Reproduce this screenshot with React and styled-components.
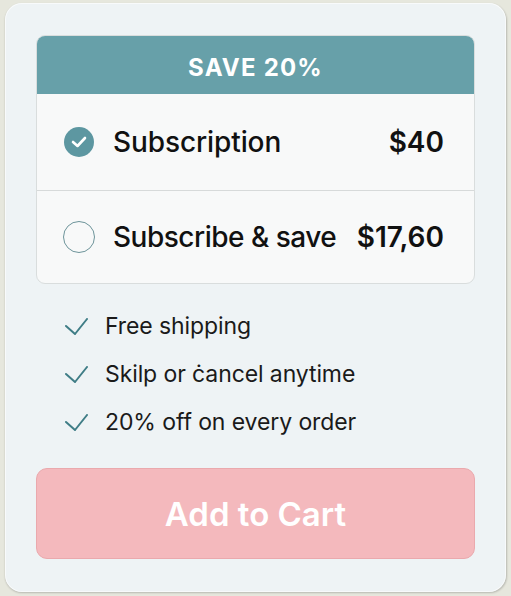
import React from "react";
import styled, { createGlobalStyle } from "styled-components";

const Global = createGlobalStyle`
  html, body { margin: 0; padding: 0; background: #e6e7dd; }
  body { font-family: Inter, "Noto Sans", sans-serif; }
`;

const Page = styled.div`
  width: 511px;
  height: 596px;
  padding: 3px 0 0 5px;
  box-sizing: border-box;
`;

const Card = styled.div`
  width: 501px;
  height: 589px;
  box-sizing: border-box;
  background: #eef3f5;
  border-radius: 17px;
  box-shadow: 0.5px 1px 2px rgba(0,0,0,0.2), inset 0 0 0 1px rgba(255,255,255,0.6);
  padding: 32px 31px 0 31px;
  display: flex;
  flex-direction: column;
`;

const OptionsBox = styled.div`
  background: #f8f9f9;
  border: 1px solid #d9dddd;
  border-radius: 9px;
  overflow: hidden;
  display: flex;
  flex-direction: column;
`;

const Header = styled.div`
  height: 58px;
  box-sizing: border-box;
  padding-top: 5px;
  background: #67a0a9;
  color: #fff;
  font-size: 24px;
  font-weight: 700;
  letter-spacing: 1.2px;
  display: flex;
  align-items: center;
  justify-content: center;
`;

const Option = styled.div`
  height: ${(p) => p.$h}px;
  display: flex;
  align-items: center;
  padding: 0 30px 0 26px;
  border-top: ${(p) => (p.$divided ? "1px solid #d7dada" : "none")};
  color: #111;
`;

const Radio = styled.span`
  width: 32px;
  height: 32px;
  box-sizing: border-box;
  border-radius: 50%;
  flex: none;
  display: flex;
  align-items: center;
  justify-content: center;
  background: ${(p) => (p.$checked ? "#5d97a1" : "transparent")};
  border: ${(p) => (p.$checked ? "none" : "1.6px solid #6d949a")};
  ${(p) => p.$checked && "width: 30px; height: 30px; margin: 0 1px;"}
`;

const Label = styled.span`
  margin-left: 18px;
  font-size: 28px;
  font-weight: 500;
  flex: 1;
  letter-spacing: ${(p) => (p.$tight ? "-0.5px" : "-0.1px")};
`;

const Price = styled.span`
  font-size: 28px;
  font-weight: 600;
`;

const Features = styled.ul`
  list-style: none;
  margin: 0;
  padding: 28px 0 0 29px;
  display: flex;
  flex-direction: column;
  gap: 20px;
`;

const Feature = styled.li`
  display: flex;
  align-items: center;
  height: 28px;
  font-size: 23px;
  color: #1a1a1a;
  letter-spacing: -0.1px;
`;

const FeatureText = styled.span`
  margin-left: 17px;
`;

const CartButton = styled.button`
  margin-top: 32px;
  height: 91px;
  border: 1px solid #eaa9ad;
  border-radius: 11px;
  background: #f4b9bd;
  color: #fff;
  font-family: Inter, "Noto Sans", sans-serif;
  font-size: 33px;
  font-weight: 600;
  cursor: pointer;
`;

const Tick = () => (
  <svg width="23" height="17" viewBox="0 0 23 17" fill="none">
    <polyline points="1,8 10,16 22,1" stroke="#3f7d86" strokeWidth="2" strokeLinecap="round" strokeLinejoin="round" />
  </svg>
);

const features = ["Free shipping", "Skilp or ċancel anytime", "20% off on every order"];

export default function App() {
  return (
    <>
      <Global />
      <Page>
        <Card>
          <OptionsBox>
            <Header>SAVE 20%</Header>
            <Option $h={96}>
              <Radio $checked>
                <svg width="16" height="12" viewBox="0 0 16 12" fill="none">
                  <polyline points="2,6 6.5,10 14,2" stroke="#fff" strokeWidth="2.6" strokeLinecap="round" strokeLinejoin="round" />
                </svg>
              </Radio>
              <Label>Subscription</Label>
              <Price>$40</Price>
            </Option>
            <Option $h={92} $divided>
              <Radio />
              <Label $tight>Subscribe &amp; save</Label>
              <Price>$17,60</Price>
            </Option>
          </OptionsBox>
          <Features>
            {features.map((f) => (
              <Feature key={f}>
                <Tick />
                <FeatureText>{f}</FeatureText>
              </Feature>
            ))}
          </Features>
          <CartButton>Add to Cart</CartButton>
        </Card>
      </Page>
    </>
  );
}
